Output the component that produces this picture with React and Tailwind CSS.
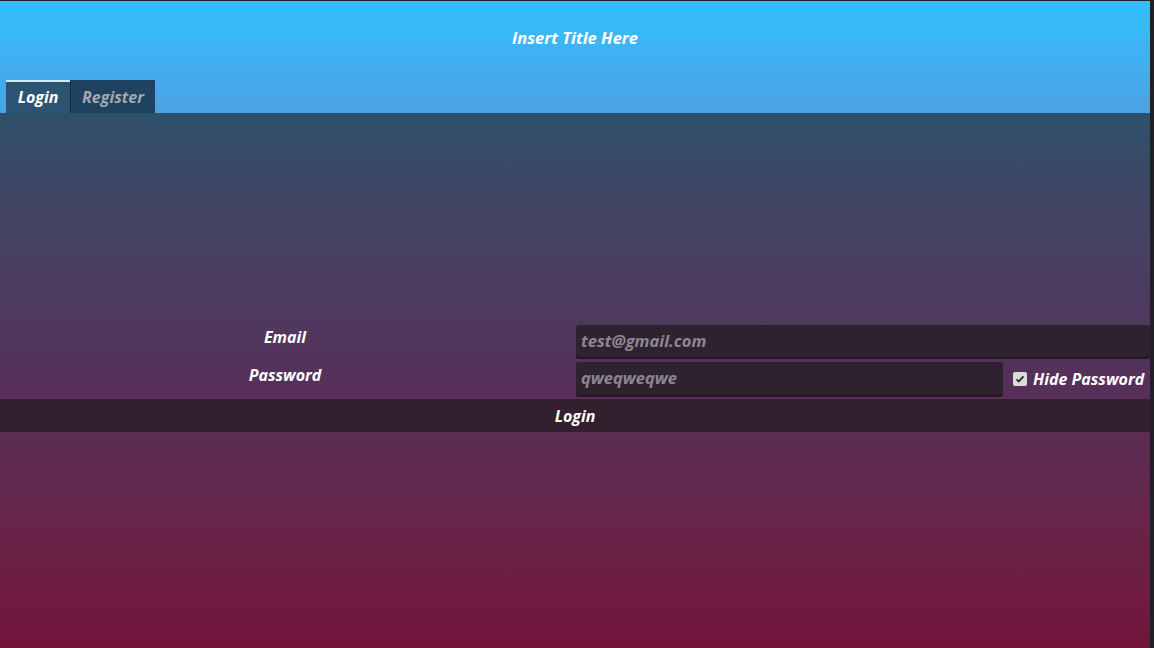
import { useState } from 'react'

export default function App() {
  const [hide, setHide] = useState(true)

  return (
    <div className="flex h-[648px] w-full overflow-hidden bg-[#1f2125] font-['Open_Sans',sans-serif] font-bold italic text-white">
      <div className="flex w-[1150px] flex-col border-t border-[#1f2125]">
        {/* header */}
        <div className="flex h-[112px] flex-col bg-gradient-to-b from-[#2ec0ff] to-[#4ba2e3]">
          <div className="flex h-[74px] items-center justify-center text-[16.5px]">Insert Title Here</div>
          <div className="mt-[5px] flex h-[33px] pl-[6px] text-[16px]">
            <button className="flex w-[64px] items-center justify-center border-t-2 border-[#d4ebf8] bg-[#2c5371] pb-[2px] italic">
              Login
            </button>
            <button className="flex w-[85px] items-center justify-center border-l border-[#1b2f40] bg-[#1e4260] italic text-[#a3a8ae]">
              Register
            </button>
          </div>
        </div>

        {/* body */}
        <div className="flex flex-1 flex-col bg-gradient-to-b from-[#2e5069] via-[#55305a] to-[#74133a] pt-[212px]">
          <div className="flex h-[32px] items-center">
            <div className="flex w-[576px] justify-center pr-[6px] pb-[8px] text-[16px]">Email</div>
            <div className="flex h-full flex-1 items-center rounded-[3px] bg-[#2e2230] px-[5px] shadow-[0_2px_0_#211822] text-[16.5px] text-[#8d8690]">
              test@gmail.com
            </div>
          </div>
          <div className="mt-[5px] flex h-[33px] items-center">
            <div className="flex w-[576px] justify-center pr-[6px] pb-[8px] text-[16px]">Password</div>
            <div className="flex h-full w-[427px] items-center rounded-[3px] bg-[#2e2230] px-[5px] shadow-[0_2px_0_#211822] text-[16.5px] text-[#8d8690]">
              qweqweqwe
            </div>
            <label className="ml-[10px] flex flex-1 cursor-pointer items-center gap-[6px] text-[16px]">
              <span
                onClick={() => setHide(!hide)}
                className="flex h-[14px] w-[14px] items-center justify-center rounded-[2px] bg-[#dcdcdc]"
              >
                {hide && (
                  <svg viewBox="0 0 14 14" className="h-[12px] w-[12px]">
                    <path d="M3 7.5l2.5 2.5L11 4" fill="none" stroke="#222" strokeWidth="2" />
                  </svg>
                )}
              </span>
              Hide Password
            </label>
          </div>
          <button className="mt-[4px] flex h-[33px] items-center justify-center bg-[#33202f] text-[16px] italic">
            Login
          </button>
        </div>
      </div>
      <div className="w-[4px]" />
    </div>
  )
}
